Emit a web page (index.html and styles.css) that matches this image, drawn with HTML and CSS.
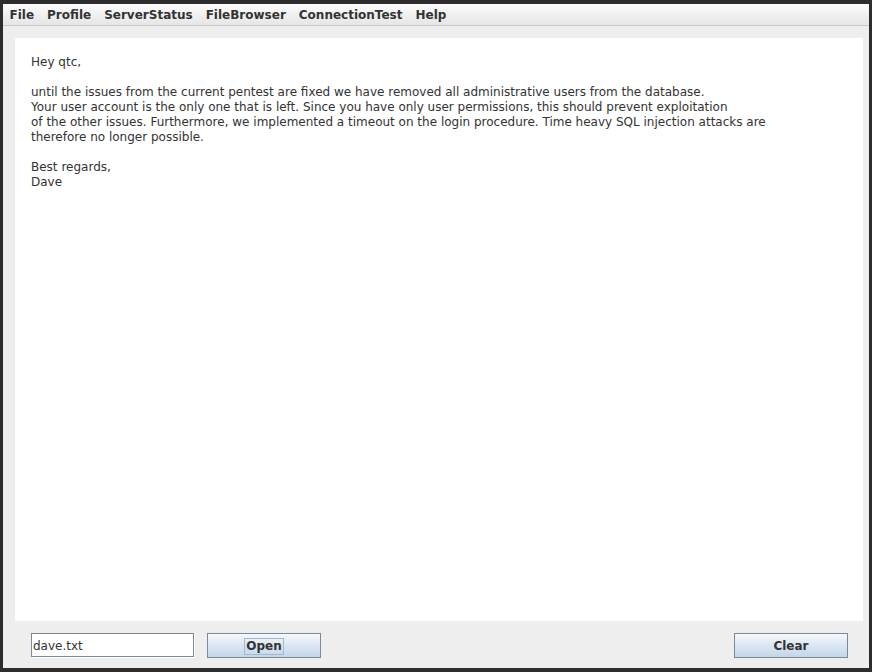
FILE: index.html
```html
<!DOCTYPE html>
<html>
<head>
<meta charset="utf-8">
<link rel="stylesheet" href="styles.css">
</head>
<body>
<div class="window">
  <div class="menubar">
    <span class="menu">File</span>
    <span class="menu">Profile</span>
    <span class="menu">ServerStatus</span>
    <span class="menu">FileBrowser</span>
    <span class="menu">ConnectionTest</span>
    <span class="menu">Help</span>
  </div>
  <div class="content">
    <div class="textarea">Hey qtc,

until the issues from the current pentest are fixed we have removed all administrative users from the database.
Your user account is the only one that is left. Since you have only user permissions, this should prevent exploitation
of the other issues. Furthermore, we implemented a timeout on the login procedure. Time heavy SQL injection attacks are
therefore no longer possible.

Best regards,
Dave</div>
  </div>
  <div class="bottombar">
    <div class="field">dave.txt</div>
    <div class="btn btn-open"><span class="focus">Open</span></div>
    <div class="spacer"></div>
    <div class="btn btn-clear">Clear</div>
  </div>
</div>
</body>
</html>
```
FILE: styles.css
```css
html, body {
  margin: 0;
  padding: 0;
}
body {
  background: #2d2d2d;
  width: 872px;
  height: 672px;
  overflow: hidden;
  font-family: "DejaVu Sans", sans-serif;
  color: #333333;
}
.window {
  margin: 4px 3px 4px 3px;
  width: 866px;
  height: 664px;
  background: #eeeeee;
  display: flex;
  flex-direction: column;
}
.menubar {
  height: 21px;
  box-sizing: content-box;
  border-bottom: 1px solid #c9c9c9;
  background: linear-gradient(#fcfcfc, #ececec 70%, #e6e6e6);
  display: flex;
  align-items: flex-start;
  padding-left: 0;
  font-size: 12px;
  font-weight: bold;
  line-height: 21px;
}
.menu {
  padding: 1px 6.5px 0 6.5px;
  color: #333333;
}
.content {
  flex: 1;
  padding: 12px 6px 0 12px;
  display: flex;
  min-height: 0;
}
.textarea {
  flex: 1;
  background: #ffffff;
  white-space: pre;
  font-size: 12px;
  line-height: 15px;
  padding: 17px 16px 0 16px;
  color: #333333;
}
.bottombar {
  height: 47px;
  display: flex;
  align-items: flex-start;
  padding: 12px 21px 0 28px;
  box-sizing: border-box;
}
.field {
  width: 163px;
  height: 24px;
  box-sizing: border-box;
  border: 1px solid #7a8a99;
  box-shadow: 1px 1px 0 #ffffff;
  background: #ffffff;
  font-size: 12px;
  line-height: 22px;
  padding: 1px 0 0 1px;
  color: #333333;
}
.btn {
  width: 114px;
  height: 25px;
  box-sizing: border-box;
  border: 1px solid #7a8a99;
  background: linear-gradient(#f6f9fc, #dde8f3 45%, #c4d6ea);
  display: flex;
  align-items: center;
  justify-content: center;
  padding-top: 1px;
  font-size: 12px;
  font-weight: bold;
  color: #333333;
}
.btn-open {
  margin-left: 13px;
}
.focus {
  border: 1px solid #a3b8cc;
  padding: 0 1px;
  line-height: 15px;
}
.spacer {
  flex: 1;
}
```
